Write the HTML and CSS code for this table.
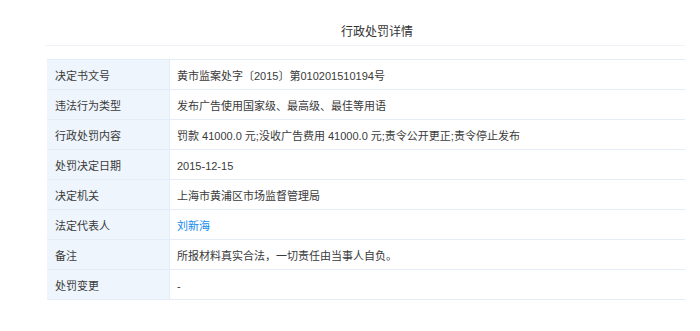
FILE: index.html
```html
<!DOCTYPE html>
<html lang="zh-CN">
<head>
<meta charset="utf-8">
<title>行政处罚详情</title>
<link rel="stylesheet" href="styles.css">
</head>
<body>
<div class="panel">
  <div class="panel-title">行政处罚详情</div>
  <table class="detail">
    <tr><td class="label">决定书文号</td><td class="value">黄市监案处字〔2015〕第010201510194号</td></tr>
    <tr><td class="label">违法行为类型</td><td class="value">发布广告使用国家级、最高级、最佳等用语</td></tr>
    <tr><td class="label">行政处罚内容</td><td class="value">罚款 41000.0 元;没收广告费用 41000.0 元;责令公开更正;责令停止发布</td></tr>
    <tr><td class="label">处罚决定日期</td><td class="value">2015-12-15</td></tr>
    <tr><td class="label">决定机关</td><td class="value">上海市黄浦区市场监督管理局</td></tr>
    <tr><td class="label">法定代表人</td><td class="value"><a class="person" href="#">刘新海</a></td></tr>
    <tr><td class="label">备注</td><td class="value">所报材料真实合法，一切责任由当事人自负。</td></tr>
    <tr><td class="label">处罚变更</td><td class="value">-</td></tr>
  </table>
</div>
</body>
</html>
```

FILE: styles.css
```css
html, body {
  margin: 0;
  padding: 0;
  background: #fff;
}

body {
  font-family: "Liberation Sans", "Noto Sans CJK SC", sans-serif;
  color: #333;
}

.panel {
  margin-left: 45px;
  width: 640px;
}

.panel-title {
  height: 46px;
  box-sizing: border-box;
  padding-top: 22px;
  padding-left: 24px;
  text-align: center;
  font-size: 12px;
  line-height: 20px;
  color: #333;
  border-bottom: 1px solid #eef1f5;
}

.detail {
  margin: 13px 0 0 2px;
  width: 638px;
  border-collapse: collapse;
  font-size: 11px;
}

.detail td {
  height: 27px;
  padding: 2px 0 0;
  border-top: 1px solid #e4edf7;
  border-bottom: 1px solid #e4edf7;
  line-height: 16px;
  vertical-align: middle;
}

.detail .label {
  width: 114px;
  padding-left: 8px;
  background: #eef5fc;
  border-right: 1px solid #e4edf7;
  color: #3a3a3a;
}

.detail .value {
  padding-left: 7px;
  color: #3a3a3a;
}

.person {
  color: #128bed;
  text-decoration: none;
}
```
